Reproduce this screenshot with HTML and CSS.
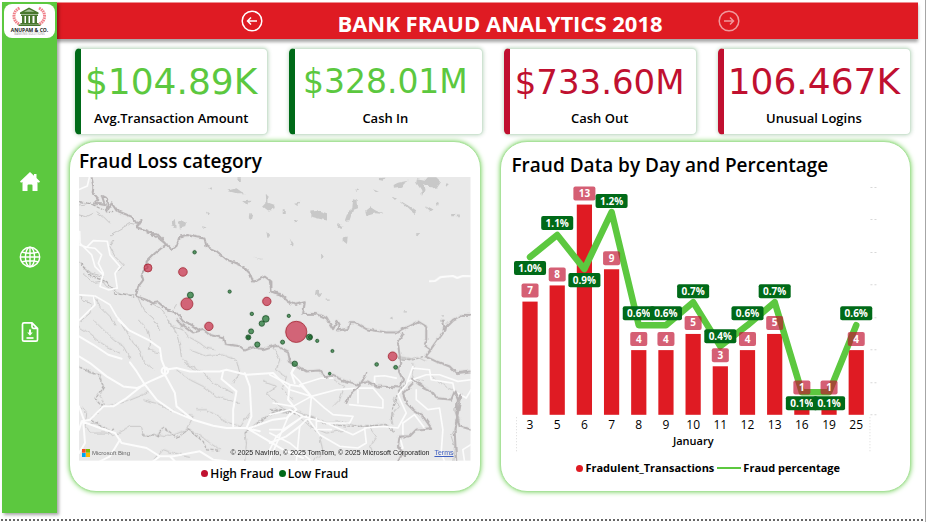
FILE: index.html
```html
<!DOCTYPE html>
<html lang="en">
<head>
<meta charset="utf-8">
<meta name="viewport" content="width=device-width, initial-scale=1">
<title>Bank Fraud Analytics 2018</title>
<link rel="stylesheet" href="styles.css">
</head>
<body>
<div class="page">
  <nav class="sidebar" aria-label="Pages">
    <a class="logo" href="#">
      <svg viewBox="0 0 51 34" role="img" aria-label="Anupam and Co.">
        <g fill="none" stroke="#f0808a" stroke-width="3" stroke-dasharray="1.6 0.7">
          <path d="M15.5 4Q9.500 7 10 13Q10.500 18 16 20.500"/>
          <path d="M35 4Q41 7 40.500 13Q40 18 34.500 20.500"/>
        </g>
        <g fill="#47772c">
          <path d="M16 8.500L25 3.500L34.500 8.500V10H16Z"/>
          <path d="M17 10.500h17v1.500H17zM18 12h2.500v7H18zM22 12h2.500v7H22zM26 12h2.500v7H26zM30.500 12H33v7h-2.500zM16.500 19H34.500v1.200H16.500zM14.500 20.500h22v1.500h-22z"/>
        </g>
        <path d="M20 7.800L25 5.200L30.500 7.800Z" fill="#a9c69b"/>
        <text class="logo-name" x="25.500" y="27.500">ANUPAM &amp; CO.</text>
        <text class="logo-tag" x="25.500" y="31">BANKING SOLUTIONS</text>
      </svg>
    </a>
    <a class="nav-link" href="#" aria-label="Home">
      <svg viewBox="0 0 22 22" fill="#fff"><path d="M11 1L1 10.500L2 11.700L3.500 11V20H8.500V14.500Q8.500 13.500 9.500 13.500H12.500Q13.500 13.500 13.500 14.500V20H18.500V11L20 11.700L21 10.500L17.500 7V3H15V4.800Z"/></svg>
    </a>
    <a class="nav-link" href="#" aria-label="Map">
      <svg viewBox="0 0 22 22" fill="none" stroke="#fff" stroke-width="1.400"><circle cx="11" cy="11" r="9.700"/><ellipse cx="11" cy="11" rx="4.600" ry="9.700"/><path d="M11 1.300V20.700M1.300 11H20.700M2.700 6Q11 8.500 19.300 6M2.700 16Q11 13.500 19.300 16"/></svg>
    </a>
    <a class="nav-link" href="#" aria-label="Download report">
      <svg viewBox="0 0 22 22" fill="none" stroke="#fff" stroke-width="1.700" stroke-linejoin="round"><path d="M13 1.800H5Q3.500 1.800 3.500 3.300V18.700Q3.500 20.200 5 20.200H17Q18.500 20.200 18.500 18.700V7.300ZM13 1.800V5.800Q13 7.300 14.500 7.300H18.500"/><path d="M11 8.500V13" stroke-width="2"/><path d="M8.200 11.500H13.800L11 14.800Z" fill="#fff" stroke="none"/><path d="M7.500 17H14.500"/></svg>
    </a>
  </nav>

  <div class="main">
    <header class="banner">
      <button class="step" type="button" aria-label="Back">
        <svg viewBox="0 0 22 22"><circle cx="11" cy="11" r="9.800"/><path d="M16 11H6.500M10 7.500L6.500 11L10 14.500"/></svg>
      </button>
      <h1>BANK FRAUD ANALYTICS 2018</h1>
      <button class="step" type="button" aria-label="Forward" disabled>
        <svg viewBox="0 0 22 22"><circle cx="11" cy="11" r="9.800"/><path d="M6 11H15.500M12 7.500L15.500 11L12 14.500"/></svg>
      </button>
    </header>

    <section class="kpis" aria-label="Key figures">
      <article class="kpi gain"><p class="figure">$104.89K</p><h2>Avg.Transaction Amount</h2></article>
      <article class="kpi gain"><p class="figure small">$328.01M</p><h2>Cash In</h2></article>
      <article class="kpi loss"><p class="figure medium">$733.60M</p><h2>Cash Out</h2></article>
      <article class="kpi loss"><p class="figure">106.467K</p><h2>Unusual Logins</h2></article>
    </section>

    <div class="panels">
      <section class="panel map-panel">
        <h2>Fraud Loss category</h2>
        <div class="map">
          <svg viewBox="79 177 392 284" role="img" aria-label="Map of fraud locations">
            <defs>
              <filter id="rough" x="-5%" y="-5%" width="110%" height="110%">
                <feTurbulence type="fractalNoise" baseFrequency="0.15" numOctaves="2" seed="4"/>
                <feDisplacementMap in="SourceGraphic" scale="4" xChannelSelector="R" yChannelSelector="G"/>
              </filter>
            </defs>
            <rect x="79" y="177" width="392" height="284" fill="#e9e9e9"/>

            <!-- lakes -->
            <g fill="#c8c8c8" filter="url(#rough)">
              <g transform="translate(0 140) scale(.33333)">
                <path d="M682 152L710 145L725 155L735 160L710 160ZM730 183L752 182L745 194ZM798 163L806 165L806 188L826 195L828 205L805 212L790 200L800 190ZM713 115h10v8h-10zM516 245L528 237L530 262L514 256ZM537 245L560 245L555 262L540 266ZM603 258L620 262L615 265ZM752 222L760 225L756 240L750 235ZM618 215L627 220L623 227ZM800 275L808 285L803 295ZM760 350L792 360L780 358ZM628 145l8-3v7z"/>
              </g>
              <g transform="translate(270 140) scale(.33333)">
                <path d="M0 195L18 200L8 210L0 212ZM122 212L140 210L172 220L172 242L155 238L122 230ZM250 178L264 180L265 205L250 210L240 240L225 243L235 215L248 205ZM287 215L303 202L318 212L342 222L318 220L290 228ZM76 188L92 185L86 195ZM42 208h6v14h-6zM74 242L87 242L80 250ZM202 250L218 262L215 268L203 258ZM222 293L234 290L232 312L222 305ZM60 295L72 315L68 320ZM154 340L162 350L155 360ZM138 448L148 445L148 460L155 465L145 472L136 462ZM168 476h12v4h-12zM328 114L348 113L340 122L328 120ZM372 135L385 128L415 122L400 132L395 140L373 143ZM442 118L465 122L475 112L500 112L515 125L502 145L488 148L478 135L460 130L465 150L457 168L455 150L440 128ZM527 130L538 132L530 140ZM366 170L382 175L376 180ZM388 180L418 198L440 215L435 222L420 210ZM310 148L328 155L318 156ZM257 148l8 3-4 5zM501 185L508 188L505 200ZM466 198L492 212L485 216ZM545 222h12v7h-12zM562 224h9v5h-9zM438 280L452 279L446 286ZM402 514h10v4h-10zM512 540h15v6h-15zM513 526h10v4h-10zM360 535l8-5 2 9z"/>
              </g>
            </g>

            <!-- state and district lines -->
            <g fill="none" stroke="#c8c7c7" stroke-width="3" stroke-linejoin="round" filter="url(#rough)">
              <g transform="translate(0 140) scale(.33333)">
                <path d="M237 195L265 190L285 195L320 190M290 215L310 230L330 250M237 225L260 230L280 220M330 285L360 268L390 250L420 255M237 365L255 385L270 400L300 415L320 440L345 450L360 463L400 467M245 375L275 400L310 410M345 300L330 320L345 350L370 375L350 395M250 400L285 430L320 425M240 465L250 480L275 490L270 520L240 545M415 475L430 510L460 535L480 570M455 490L480 505L500 530L515 560L550 570M280 470L300 500L330 530L345 560M515 515L530 490"/>
              </g>
              <g transform="translate(60 320) scale(.33333)">
                <path d="M57 20L80 35L110 60L140 80L180 100M100 0L130 30L160 60L190 80L210 115M180 0L200 35L220 70L240 90L250 125L280 150M235 0L260 30L270 60L265 90L300 100M325 0L350 40L360 80L365 115L400 150L430 155M350 0L385 50L420 70L440 85L470 90M350 150L390 180L430 200L470 230L500 240L540 250M370 130L420 150L460 190L520 220M390 90L440 110L490 105L530 120L540 160L520 190M57 140L90 160L120 165L130 195L120 230L135 260L200 245L250 225L270 210M250 240L290 250L320 265L350 280L400 290M90 310L130 320L160 350L210 320L245 320L250 350L300 345L330 350L380 330L410 340L450 370L480 390M57 260L80 280L75 320L90 340L150 340M555 425L560 370L555 340L590 310L620 290L660 270L710 275M610 185L650 200L620 220L660 260L700 280M570 280L540 320L510 310L440 270L410 270M640 80L660 120L650 150L680 170L670 210L700 240M280 425L310 390L340 400L390 410M400 290L380 330L410 350"/>
              </g>
              <g transform="translate(270 320) scale(.33333)">
                <path d="M0 270L40 280L80 275L120 290L170 310L220 305L260 320L300 320L350 315L370 330M190 180L225 200L210 240L190 260M300 325L320 350L300 380L315 410M370 315L365 290L390 260L370 240L390 210L410 190L400 175M385 115L420 120L440 110L470 125M430 130L430 175L460 185M390 110L430 118M550 425L555 380L545 350L560 320L570 300L555 270L570 230M480 160L510 190L550 210M110 300L150 350L160 400L130 425M80 280L120 320L170 340L230 330"/>
              </g>
            </g>
            <g fill="none" stroke="#b0aeae" stroke-width="3.500" stroke-dasharray="10 4" filter="url(#rough)">
              <g transform="translate(0 140) scale(.33333)"><path d="M237 185L270 190L310 210L340 215M240 370L275 410L320 425L345 460L400 472"/></g>
              <g transform="translate(60 320) scale(.33333)"><path d="M57 145L115 165L130 200L105 235L130 260L90 300L150 335L165 325M245 345L290 350L310 325L350 355L385 330L430 365L440 390L480 395M555 340L650 270L705 275"/></g>
              <g transform="translate(270 320) scale(.33333)"><path d="M0 270L60 278L110 290L180 315L260 320L350 315L375 340M385 115L430 120L460 110M365 300L370 260L385 220L410 190"/></g>
            </g>

            <!-- roads -->
            <g fill="none" stroke="#fcfcfc" stroke-width="6" stroke-linejoin="round" stroke-linecap="round">
              <g transform="translate(0 140) scale(.33333)">
                <path d="M239 148L262 138L268 112M239 315L260 322L280 302L322 304L330 345L360 380L345 400L352 445L325 450L300 440L310 400L295 370L305 345L285 325L260 322M239 275L240 310L275 345L285 380L310 405M239 465L280 468L285 495L239 540M285 468L330 495L350 530L385 570" stroke-width="5"/>
              </g>
              <g transform="translate(270 140) scale(.33333)"><path d="M480 424L497 423L512 412L550 408L563 414L580 408L604 409"/></g>
              <g transform="translate(60 320) scale(.33333)">
                <path d="M175 0L205 30L265 60L300 85L305 120L315 145L315 165L270 185L250 195L200 235L160 260L130 260L90 300L65 305L57 330M57 50L100 75L145 105L185 117M57 110L90 130L140 170L190 200L230 205L255 195L230 155L210 128M255 195L290 240L340 275L400 300L460 318L500 325L560 325L600 335M315 150L350 145L390 155L480 155L500 150L560 165L640 160L660 180L690 195L720 200M490 155L485 178L530 215L520 270L520 320M555 160L570 200L575 290L560 325M315 165L345 220L350 260L400 300M65 305L120 325L165 340L185 370L260 385L300 410L340 410L420 395L460 420L500 425M180 360L150 410L120 425M75 310L57 260M70 310L75 370L57 400M690 195L685 240L710 270L680 295L640 300L570 325M560 325L620 360L670 390L730 415M300 410L280 425M330 410L345 425M710 135L695 160L705 190M630 370L680 350L720 320"/>
                <circle cx="315" cy="153" r="10"/>
              </g>
              <g transform="translate(270 320) scale(.33333)">
                <path d="M75 135L65 160L90 185L125 230L165 265L190 285L250 290L240 310L170 310L100 290L60 270L0 285M0 165L30 180L60 210L125 230L200 210L265 205L310 205L340 240L340 265L240 255M125 230L90 195L155 175L190 175M125 230L70 260L10 250M125 230L120 290L90 320L80 425M265 205L265 250M315 190L315 170L345 168L380 175M100 290L70 310L40 330L0 330M100 290L20 350L0 390M110 290L150 345L210 380L265 385L290 370L285 325L340 320L385 325M170 310L250 345L290 325M60 280L0 420M385 325L410 280L385 225L410 195L430 140M430 145L480 150L485 180L550 190L555 215L590 235L605 210M415 185L470 165L510 165L565 185L604 180M440 210L440 240L475 270L510 265L520 330L515 400L525 425M400 345L400 310L435 285L465 325M375 395L400 385L390 350M585 425L580 390L604 375M0 340L60 370L120 420M140 295L140 330L185 330" stroke-width="5"/>
              </g>
            </g>

            <!-- country borders -->
            <g fill="none" stroke="#b8b4b5" stroke-width="6" stroke-linejoin="round" filter="url(#rough)">
              <g transform="translate(0 140) scale(.33333)">
                <path d="M275 112L280 140L278 160L295 180L285 190L315 195L305 165L325 175L320 215L335 190L350 212L370 220L395 230L410 250L425 240L410 262L440 272L470 290L495 310L515 328L530 318L540 290L560 285L590 292L614 296L620 320L650 333L680 358L730 380L750 400L760 425L775 420L795 410L815 425L815 455L845 465"/>
                <path d="M440 278L470 280L500 312L465 340L440 365L440 385L425 405L430 420L415 440L408 468L440 480L455 490L475 487L500 508L530 520L550 545L575 555L600 572"/>
              </g>
              <g transform="translate(270 140) scale(.33333)">
                <path d="M0 420L5 455L30 462L55 485L75 495L105 487L100 522L140 522L170 535L190 568L203 543L210 555L205 572L235 567L240 550L260 550L290 568L350 578L385 578L400 568L445 545L470 560M520 570L550 540L580 525L603 525"/>
              </g>
              <g transform="translate(60 320) scale(.33333)">
                <path d="M350 0L375 20L400 38L430 30L450 45L490 55L495 72L540 80L555 92L580 82L610 88L650 75L660 85L685 98L690 125L705 135"/>
              </g>
              <g transform="translate(270 320) scale(.33333)">
                <path d="M75 135L110 155L150 152L165 172L190 168L220 182L265 195L295 185L320 200L390 203L400 180L385 150L395 130L390 110L385 70L400 40M470 20L470 60L463 75L485 90L468 110L500 65L525 30L520 0M468 110L500 125L540 140L560 160L603 155M230 250L240 225L265 205L295 155M425 175L450 195L480 210L500 235L545 240L555 215L565 240L560 280L570 320L604 330M430 190L400 220L410 250L430 270L460 290L485 325L440 330L420 350L390 350L385 380L400 400L385 425M565 240L575 225L565 280L555 330L560 425"/>
              </g>
            </g>

            <g fill="#c41230" fill-opacity=".62" stroke="#a0202c" stroke-width=".8">
              <circle cx="148" cy="268" r="4"/><circle cx="183" cy="272" r="4.300"/><circle cx="187" cy="304" r="6"/><circle cx="267" cy="301.500" r="4.200"/><circle cx="209" cy="326.500" r="4.200"/><circle cx="296.500" cy="332" r="10.600"/><circle cx="393" cy="356.500" r="4.400"/>
            </g>
            <g fill="#116f26" fill-opacity=".68" stroke="#164a22" stroke-width=".8">
              <circle cx="194.700" cy="252.300" r="1.700"/><circle cx="190.500" cy="295.200" r="3"/><circle cx="229.800" cy="291.700" r="1.600"/><circle cx="252" cy="314" r="1.700"/><circle cx="266" cy="319" r="3.300"/><circle cx="262" cy="323.700" r="2.700"/><circle cx="251.300" cy="331.500" r="2.500"/><circle cx="248.500" cy="337.500" r="2.500"/><circle cx="248.500" cy="337.500" r="1.500"/><circle cx="257.500" cy="344.700" r="2.600"/><circle cx="282.800" cy="342.300" r="2"/><circle cx="289" cy="316" r="1.600"/><circle cx="309.700" cy="337.300" r="3"/><circle cx="310.500" cy="337.300" r="1.800"/><circle cx="317.500" cy="341" r="1.600"/><circle cx="332.700" cy="351.200" r="1.500"/><circle cx="295" cy="364" r="2.700"/><circle cx="330" cy="373.800" r="1.300"/><circle cx="377" cy="364.600" r="1.800"/><circle cx="396" cy="367.500" r="1.900"/>
            </g>
          </svg>
          <div class="credits">
            <span class="bing"><svg viewBox="0 0 8 8"><path fill="#f25022" d="M0 0h3.700v3.700H0z"/><path fill="#7fba00" d="M4 0h4v3.700H4z"/><path fill="#00a4ef" d="M0 4h3.700v4H0z"/><path fill="#ffb900" d="M4 4h4v4H4z"/></svg>Microsoft Bing</span>
            <span class="rights">© 2025 NavInfo, © 2025 TomTom, © 2025 Microsoft Corporation <a href="#">Terms</a></span>
          </div>
        </div>
        <ul class="legend">
          <li><i class="dot high"></i>High Fraud</li>
          <li><i class="dot low"></i>Low Fraud</li>
        </ul>
      </section>

      <section class="panel chart-panel">
        <h2>Fraud Data by Day and Percentage</h2>
        <svg class="chart" viewBox="512 181 387 272" role="img" aria-label="Fraudulent transactions and fraud percentage by day in January">
          <g stroke="#d8d8d8" stroke-width="1" stroke-dasharray="2 2">
            <path d="M870 187.500h6M870 219.500h6M870 252.500h6M870 284.500h6M870 317.500h6M870 349.500h6M870 382.500h6M870 414.500h6"/>
            <path d="M516.500 417v34M869.500 417v34" stroke-dasharray="1 2"/>
          </g>
          <g id="bars" fill="#df1b23"></g>
          <polyline id="trend" fill="none" stroke="#5cc83f" stroke-width="6.500" stroke-linejoin="round" stroke-linecap="round"/>
          <g id="counts" class="tag"></g>
          <g id="rates" class="tag"></g>
          <g id="days" class="axis"></g>
          <text class="axis month" x="693" y="445">January</text>
        </svg>
        <ul class="legend strong">
          <li><i class="dot count"></i>Fradulent_Transactions</li>
          <li><i class="line"></i>Fraud percentage</li>
        </ul>
      </section>
    </div>
  </div>
</div>
<script src="chart.js"></script>
</body>
</html>
```
FILE: styles.css
```css
* {
  box-sizing: border-box;
}

body {
  margin: 0;
  background: #fff;
  color: #000;
  font-family: "Open Sans", "Noto Sans", sans-serif;
}

h1, h2, p, ul {
  margin: 0;
  padding: 0;
}

.page {
  display: grid;
  grid-template-columns: 55px 1fr;
  min-height: 100vh;
  padding: 2px 7px 9px 2px;
  border-right: 1px solid #a6a6a6;
  background: repeating-linear-gradient(90deg, #666 0 2px, #fff 2px 4px) 1px calc(100% - 1px) / 100% 2px no-repeat;
}

.sidebar {
  display: flex;
  flex-direction: column;
  align-items: center;
  background: #5cc83f;
  box-shadow: 2px 2px 3px rgba(0, 0, 0, 0.35);
  z-index: 1;
}

.logo {
  width: 51px;
  margin: 2px 0 133px;
  border-radius: 8px;
  background: #fff;
}

.logo svg,
.nav-link svg,
.step svg,
.map > svg,
.chart {
  display: block;
  width: 100%;
}

.logo-name {
  font: 700 5px "Open Sans", sans-serif;
  text-anchor: middle;
  fill: #222;
}

.logo-tag {
  font: 3px "Open Sans", sans-serif;
  text-anchor: middle;
  fill: #999;
}

.nav-link {
  width: 22px;
  margin-bottom: 53px;
}

.banner {
  display: flex;
  align-items: center;
  height: 37px;
  padding: 0 178px 0 184px;
  border-top: 1px solid #ee8d90;
  background: #df1b23;
  box-shadow: 0 3px 3px rgba(0, 0, 0, 0.35);
}

.banner h1 {
  flex: 1;
  padding: 4px 0 0 19px;
  color: #fff;
  font-size: 22px;
  font-weight: 700;
  line-height: 28px;
  text-align: center;
  white-space: nowrap;
}

.step {
  flex: none;
  width: 22px;
  padding: 0;
  border: 0;
  background: none;
}

.step svg {
  fill: none;
  stroke: #fff;
  stroke-width: 1.5px;
}

.step:disabled {
  opacity: 0.55;
}

.kpis {
  display: grid;
  grid-template-columns: repeat(4, 1fr);
  gap: 21px;
  margin: 9px 7px 0 18px;
}

.kpi {
  height: 87px;
  padding: 10px 6px 0 0;
  border: 1px solid #cfe3d2;
  border-left: 6px solid;
  border-radius: 5px;
  background: #fff;
  box-shadow: 0 0 4px rgba(0, 100, 20, 0.3);
  text-align: center;
}

.gain {
  border-left-color: #006a18;
}

.loss {
  border-left-color: #c01030;
}

.figure {
  font-family: "DejaVu Sans", sans-serif;
  font-size: 36px;
  line-height: 46px;
}

.figure.medium {
  font-size: 34px;
}

.figure.small {
  font-size: 33px;
}

.gain .figure {
  color: #5cc83f;
}

.loss .figure {
  color: #c01030;
}

.kpi h2 {
  font-size: 13px;
  font-weight: 600;
  line-height: 26px;
}

.panels {
  display: grid;
  grid-template-columns: 1fr 1fr;
  gap: 19px;
  margin: 6px 7px 0 12px;
}

.panel {
  border: 1px solid #a9e29b;
  border-radius: 27px;
  background: #fff;
  box-shadow: 0 0 5px #6fd055;
}

.panel h2 {
  margin-bottom: 3px;
  font-size: 19px;
  font-weight: 600;
  line-height: 26px;
  white-space: nowrap;
}

.map-panel {
  padding: 6px 9px 4px;
}

.chart-panel {
  padding: 10px 11px;
}

.map {
  position: relative;
}

.credits {
  position: absolute;
  right: 17px;
  bottom: 3px;
  left: 3px;
  display: flex;
  justify-content: space-between;
  align-items: center;
  color: #222;
  font-family: "Liberation Sans", sans-serif;
  font-size: 7px;
  line-height: 10px;
  white-space: nowrap;
}

.bing {
  display: flex;
  align-items: center;
  gap: 2px;
  color: #666;
  font-size: 6px;
}

.bing svg {
  width: 8px;
}

.credits a {
  margin-left: 3px;
  color: #3f5fc0;
}

.legend {
  display: flex;
  justify-content: center;
  align-items: center;
  gap: 5px;
  font-size: 12px;
  font-weight: 600;
  line-height: 26px;
  list-style: none;
  white-space: nowrap;
}

.legend li {
  display: flex;
  align-items: center;
  gap: 2px;
}

.strong {
  gap: 3px;
  margin-top: 2px;
  padding-left: 6px;
  font-size: 11px;
  font-weight: 700;
}

.dot {
  width: 7px;
  height: 7px;
  border-radius: 50%;
}

.high {
  background: #c01030;
}

.low {
  background: #006a18;
}

.count {
  background: #df1b23;
}

.line {
  width: 24px;
  height: 2px;
  background: #5cc83f;
}

.tag text {
  fill: #fff;
  font-size: 10px;
  font-weight: 700;
  text-anchor: middle;
}

.axis {
  font-size: 12px;
  font-weight: 500;
  text-anchor: middle;
}

.month {
  font-size: 11px;
  font-weight: 600;
}
```
FILE: chart.js
```js
const days = [
  { day: 3, count: 7, rate: "1.0%", y: 257, tag: 268 },
  { day: 5, count: 8, rate: "1.1%", y: 235, tag: 223 },
  { day: 6, count: 13, rate: "0.9%", y: 269, tag: 280 },
  { day: 7, count: 9, rate: "1.2%", y: 212, tag: 201 },
  { day: 8, count: 4, rate: "0.6%", y: 325, tag: 313 },
  { day: 9, count: 4, rate: "0.6%", y: 325, tag: 313 },
  { day: 10, count: 5, rate: "0.7%", y: 302, tag: 291 },
  { day: 11, count: 3, rate: "0.4%", y: 346, tag: 336 },
  { day: 12, count: 4, rate: "0.6%", y: 325, tag: 313 },
  { day: 13, count: 5, rate: "0.7%", y: 302, tag: 291 },
  { day: 16, count: 1, rate: "0.1%", y: 392, tag: 403 },
  { day: 19, count: 1, rate: "0.1%", y: 392, tag: 403 },
  { day: 25, count: 4, rate: "0.6%", y: 325, tag: 313 }
];

const baseline = 414.5;
const unit = 16.15;
const firstX = 530;
const pitch = 27.15;

function add(parent, name, attributes, text) {
  const node = document.createElementNS("http://www.w3.org/2000/svg", name);
  for (const [key, value] of Object.entries(attributes)) node.setAttribute(key, value);
  if (text !== undefined) node.textContent = text;
  document.getElementById(parent).append(node);
}

function addTag(parent, x, y, width, fill, text) {
  add(parent, "rect", { x: x - width / 2, y: y - 7, width, height: 14, rx: 2, fill });
  add(parent, "text", { x, y: y + 3.5 }, text);
}

const points = days.map((d, i) => {
  const x = firstX + i * pitch;
  const height = d.count * unit;
  add("bars", "rect", { x: x - 7.6, y: baseline - height, width: 15.2, height });
  addTag("counts", x, baseline - height - 11, d.count > 9 ? 22 : 17, "rgba(192, 16, 48, 0.67)", d.count);
  addTag("rates", x, d.tag, 32, "#006a18", d.rate);
  add("days", "text", { x, y: 429 }, d.day);
  return `${x},${d.y}`;
});
document.getElementById("trend").setAttribute("points", points.join(" "));
```
